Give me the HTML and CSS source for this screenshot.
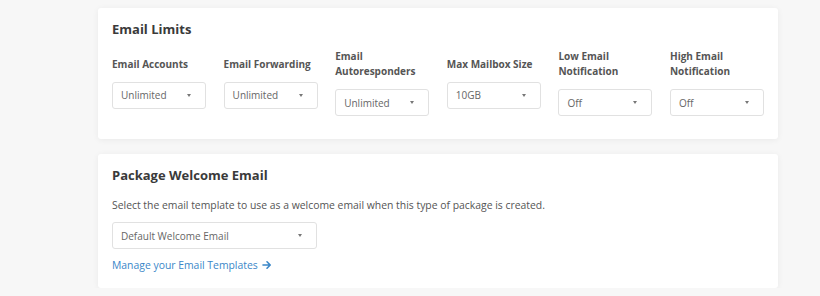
FILE: index.html
```html
<!DOCTYPE html>
<html lang="en">
<head>
    <meta charset="UTF-8">
    <meta name="viewport" content="width=device-width, initial-scale=1.0">
    <title>Package Email Settings</title>
    <link rel="stylesheet" href="styles.css">
</head>
<body>
    <main class="page">
        <section class="card">
            <h2>Email Limits</h2>
            <div class="limits">
                <div class="field">
                    <label>Email Accounts</label>
                    <div class="dropdown"><span>Unlimited</span><i class="caret"></i></div>
                </div>
                <div class="field">
                    <label>Email Forwarding</label>
                    <div class="dropdown"><span>Unlimited</span><i class="caret"></i></div>
                </div>
                <div class="field">
                    <label>Email<br>Autoresponders</label>
                    <div class="dropdown"><span>Unlimited</span><i class="caret"></i></div>
                </div>
                <div class="field">
                    <label>Max Mailbox Size</label>
                    <div class="dropdown"><span>10GB</span><i class="caret"></i></div>
                </div>
                <div class="field">
                    <label>Low Email<br>Notification</label>
                    <div class="dropdown"><span>Off</span><i class="caret"></i></div>
                </div>
                <div class="field">
                    <label>High Email<br>Notification</label>
                    <div class="dropdown"><span>Off</span><i class="caret"></i></div>
                </div>
            </div>
        </section>

        <section class="card welcome">
            <h2>Package Welcome Email</h2>
            <p>Select the email template to use as a welcome email when this type of package is created.</p>
            <div class="dropdown wide"><span>Default Welcome Email</span><i class="caret"></i></div>
            <a href="#" class="manage-link">Manage your Email Templates
                <svg width="10" height="10" viewBox="0 0 10 10"><path d="M1 5h7M5 1.8 8.2 5 5 8.2" fill="none" stroke="currentColor" stroke-width="1.6" stroke-linecap="round" stroke-linejoin="round"/></svg>
            </a>
        </section>
    </main>
</body>
</html>
```

FILE: styles.css
```css
* {
    margin: 0;
    padding: 0;
    box-sizing: border-box;
    font-family: 'Open Sans', 'Liberation Sans', sans-serif;
}

body {
    background-color: #f7f7f7;
    color: #444;
}

.page {
    width: 680px;
    margin: 8px 0 0 98px;
    display: flex;
    flex-direction: column;
    gap: 15px;
}

.card {
    background: white;
    border-radius: 3px;
    box-shadow: 0 1px 6px rgba(0, 0, 0, 0.06);
    padding: 12px 14px 23px;
}

.card h2 {
    font-size: 13px;
    line-height: 18px;
    font-weight: 700;
    color: #3a3a3a;
}

.limits {
    display: grid;
    grid-template-columns: repeat(6, 1fr);
    column-gap: 17.6px;
    align-items: center;
    margin-top: 11px;
}

.field {
    display: flex;
    flex-direction: column;
    gap: 10px;
}

.field label {
    font-size: 10px;
    line-height: 15px;
    font-weight: 700;
    color: #555;
    white-space: nowrap;
}

.dropdown {
    height: 27px;
    border: 1px solid #e1e1e1;
    border-radius: 3px;
    display: flex;
    align-items: center;
    justify-content: space-between;
    padding: 0 14px 0 8px;
    font-size: 10px;
    color: #666;
    background: white;
}

.caret {
    width: 0;
    height: 0;
    border-left: 2.5px solid transparent;
    border-right: 2.5px solid transparent;
    border-top: 3px solid #777;
}

.welcome {
    padding-bottom: 14px;
}

.welcome p {
    font-size: 10.4px;
    line-height: 16px;
    color: #555;
    margin-top: 13px;
}

.dropdown.wide {
    width: 205px;
    margin-top: 9px;
}

.manage-link {
    display: inline-flex;
    align-items: center;
    gap: 4px;
    margin-top: 8px;
    font-size: 10.4px;
    line-height: 16px;
    color: #3a87c8;
    text-decoration: none;
}
```
